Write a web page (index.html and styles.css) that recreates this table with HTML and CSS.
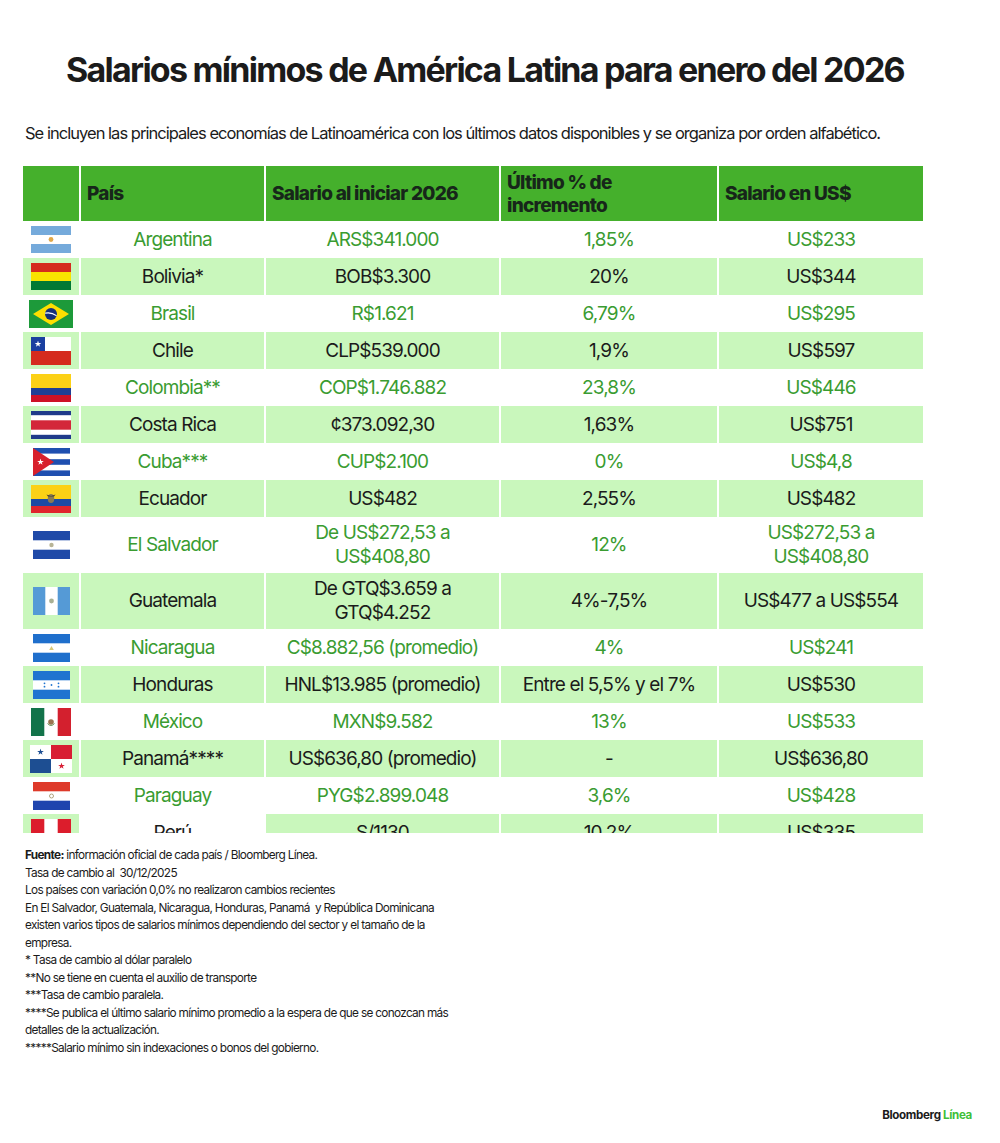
FILE: index.html
```html
<!DOCTYPE html>
<html lang="es">
<head>
<meta charset="utf-8">
<title>Salarios mínimos de América Latina para enero del 2026</title>
<link rel="stylesheet" href="styles.css">
</head>
<body>
<svg class="defs" width="0" height="0" aria-hidden="true">
  <symbol id="star" viewBox="-1 -1 2 2">
    <polygon points="0,-1 0.225,-0.309 0.951,-0.309 0.363,0.118 0.588,0.809 0,0.382 -0.588,0.809 -0.363,0.118 -0.951,-0.309 -0.225,-0.309"/>
  </symbol>
</svg>
<main class="page">
  <h1 class="title">Salarios mínimos de América Latina para enero del 2026</h1>
  <p class="subtitle">Se incluyen las principales economías de Latinoamérica con los últimos datos disponibles y se organiza por orden alfabético.</p>

  <div class="table-wrap">
    <table class="wages">
      <colgroup>
        <col class="c-flag"><col class="c-country"><col class="c-salary"><col class="c-pct"><col class="c-usd">
      </colgroup>
      <thead>
        <tr>
          <th></th>
          <th>País</th>
          <th>Salario al iniciar 2026</th>
          <th>Último % de<br>incremento</th>
          <th>Salario en US$</th>
        </tr>
      </thead>
      <tbody>
        <tr class="light">
          <td class="flag"><svg viewBox="0 0 40 27" width="40" height="27"><rect width="40" height="27" fill="#75aadb"/><rect y="9" width="40" height="9" fill="#fff"/><circle cx="20" cy="13.5" r="2.4" fill="#e0a848"/></svg></td>
          <td>Argentina</td><td>ARS$341.000</td><td>1,85%</td><td>US$233</td>
        </tr>
        <tr class="tint">
          <td class="flag"><svg viewBox="0 0 40 27" width="40" height="27"><rect width="40" height="9" fill="#d52b1e"/><rect y="9" width="40" height="9" fill="#f9e300"/><rect y="18" width="40" height="9" fill="#007934"/></svg></td>
          <td>Bolivia*</td><td>BOB$3.300</td><td>20%</td><td>US$344</td>
        </tr>
        <tr class="light">
          <td class="flag"><svg viewBox="0 0 44 28" width="44" height="28"><rect width="44" height="28" fill="#1d9a3a"/><polygon points="22,3 40,14 22,25 4,14" fill="#fedf00"/><circle cx="22" cy="14" r="6" fill="#16307a"/><path d="M16.3 12.6 Q22 11 27.7 15.2 L27.5 16.3 Q22 12.4 16.1 13.8 Z" fill="#fff"/></svg></td>
          <td>Brasil</td><td>R$1.621</td><td>6,79%</td><td>US$295</td>
        </tr>
        <tr class="tint">
          <td class="flag"><svg viewBox="0 0 40 28" width="40" height="28"><rect width="40" height="14" fill="#fff"/><rect y="14" width="40" height="14" fill="#d52b1e"/><rect width="14" height="14" fill="#1a3fa0"/><use href="#star" x="3.5" y="3.5" width="7" height="7" fill="#fff"/></svg></td>
          <td>Chile</td><td>CLP$539.000</td><td>1,9%</td><td>US$597</td>
        </tr>
        <tr class="light">
          <td class="flag"><svg viewBox="0 0 40 28" width="40" height="28"><rect width="40" height="14" fill="#fcd116"/><rect y="14" width="40" height="7" fill="#1f3f95"/><rect y="21" width="40" height="7" fill="#ce1126"/></svg></td>
          <td>Colombia**</td><td>COP$1.746.882</td><td>23,8%</td><td>US$446</td>
        </tr>
        <tr class="tint">
          <td class="flag"><svg viewBox="0 0 40 28" width="40" height="28"><rect width="40" height="28" fill="#fff"/><rect width="40" height="4.2" fill="#1f3a8a"/><rect y="9.3" width="40" height="9.4" fill="#d3273a"/><rect y="23.8" width="40" height="4.2" fill="#1f3a8a"/></svg></td>
          <td>Costa Rica</td><td>¢373.092,30</td><td>1,63%</td><td>US$751</td>
        </tr>
        <tr class="light">
          <td class="flag"><svg viewBox="0 0 37 28" width="37" height="28"><rect width="37" height="28" fill="#fff"/><rect width="37" height="5.6" fill="#1f4fb0"/><rect y="11.2" width="37" height="5.6" fill="#1f4fb0"/><rect y="22.4" width="37" height="5.6" fill="#1f4fb0"/><polygon points="0,0 21,14 0,28" fill="#d8202c"/><use href="#star" x="4" y="10.5" width="7" height="7" fill="#fff"/></svg></td>
          <td>Cuba***</td><td>CUP$2.100</td><td>0%</td><td>US$4,8</td>
        </tr>
        <tr class="tint">
          <td class="flag"><svg viewBox="0 0 40 28" width="40" height="28"><rect width="40" height="14" fill="#fbd116"/><rect y="14" width="40" height="7" fill="#1c4aa3"/><rect y="21" width="40" height="7" fill="#e0252c"/><ellipse cx="20" cy="13.5" rx="3.2" ry="4.6" fill="#8a7a52"/><path d="M15.5 9.5 L20 11 L24.5 9.5 L23 11.5 L17 11.5 Z" fill="#4a4030"/></svg></td>
          <td>Ecuador</td><td>US$482</td><td>2,55%</td><td>US$482</td>
        </tr>
        <tr class="light tall">
          <td class="flag"><svg viewBox="0 0 37 28" width="37" height="28"><rect width="37" height="28" fill="#fff"/><rect width="37" height="9.3" fill="#1f4aa8"/><rect y="18.7" width="37" height="9.3" fill="#1f4aa8"/><circle cx="18.5" cy="14" r="2.2" fill="#b8b496"/></svg></td>
          <td>El Salvador</td><td>De US$272,53 a<br>US$408,80</td><td>12%</td><td>US$272,53 a<br>US$408,80</td>
        </tr>
        <tr class="tint tall">
          <td class="flag"><svg viewBox="0 0 37 28" width="37" height="28"><rect width="37" height="28" fill="#fff"/><rect width="12.3" height="28" fill="#559ad6"/><rect x="24.7" width="12.3" height="28" fill="#559ad6"/><circle cx="18.5" cy="14" r="2.4" fill="#a8b094"/></svg></td>
          <td>Guatemala</td><td>De GTQ$3.659 a<br>GTQ$4.252</td><td>4%-7,5%</td><td>US$477 a US$554</td>
        </tr>
        <tr class="light">
          <td class="flag"><svg viewBox="0 0 37 28" width="37" height="28"><rect width="37" height="28" fill="#fff"/><rect width="37" height="9.3" fill="#1f6fcc"/><rect y="18.7" width="37" height="9.3" fill="#1f6fcc"/><polygon points="18.5,12 20.8,16 16.2,16" fill="#d8c878"/></svg></td>
          <td>Nicaragua</td><td>C$8.882,56 (promedio)</td><td>4%</td><td>US$241</td>
        </tr>
        <tr class="tint">
          <td class="flag"><svg viewBox="0 0 37 28" width="37" height="28"><rect width="37" height="28" fill="#fff"/><rect width="37" height="9.3" fill="#1f74d0"/><rect y="18.7" width="37" height="9.3" fill="#1f74d0"/><g fill="#1f74d0"><circle cx="11.5" cy="12.3" r="0.9"/><circle cx="11.5" cy="15.7" r="0.9"/><circle cx="18.5" cy="14" r="0.9"/><circle cx="25.5" cy="12.3" r="0.9"/><circle cx="25.5" cy="15.7" r="0.9"/></g></svg></td>
          <td>Honduras</td><td>HNL$13.985 (promedio)</td><td>Entre el 5,5% y el 7%</td><td>US$530</td>
        </tr>
        <tr class="light">
          <td class="flag"><svg viewBox="0 0 40 28" width="40" height="28"><rect width="40" height="28" fill="#fff"/><rect width="13.3" height="28" fill="#12734a"/><rect x="26.7" width="13.3" height="28" fill="#d3202e"/><circle cx="20" cy="14" r="2.8" fill="#9a7450"/><path d="M16.5 15.5 Q20 19.5 23.5 15.5" stroke="#5b8a4a" stroke-width="0.9" fill="none"/></svg></td>
          <td>México</td><td>MXN$9.582</td><td>13%</td><td>US$533</td>
        </tr>
        <tr class="tint">
          <td class="flag"><svg viewBox="0 0 42 28" width="42" height="28"><rect width="42" height="28" fill="#fff"/><rect x="21" width="21" height="14" fill="#d81e34"/><rect y="14" width="21" height="14" fill="#1d4e92"/><use href="#star" x="7" y="3.5" width="7" height="7" fill="#1d4e92"/><use href="#star" x="28" y="17.5" width="7" height="7" fill="#d81e34"/></svg></td>
          <td>Panamá****</td><td>US$636,80 (promedio)</td><td>-</td><td>US$636,80</td>
        </tr>
        <tr class="light">
          <td class="flag"><svg viewBox="0 0 37 28" width="37" height="28"><rect width="37" height="28" fill="#fff"/><rect width="37" height="9.3" fill="#de3a2a"/><rect y="18.7" width="37" height="9.3" fill="#1f45ae"/><circle cx="18.5" cy="14" r="2" fill="none" stroke="#a89a70" stroke-width="0.9"/></svg></td>
          <td>Paraguay</td><td>PYG$2.899.048</td><td>3,6%</td><td>US$428</td>
        </tr>
        <tr class="tint">
          <td class="flag"><svg viewBox="0 0 40 28" width="40" height="28"><rect width="40" height="28" fill="#fff"/><rect width="13.3" height="28" fill="#dc1d2c"/><rect x="26.7" width="13.3" height="28" fill="#dc1d2c"/></svg></td>
          <td class="blank">Perú</td><td>S/1130</td><td>10,2%</td><td>US$335</td>
        </tr>
      </tbody>
    </table>
  </div>

  <div class="notes">
    <p><strong>Fuente:</strong> información oficial de cada país / Bloomberg Línea.</p>
    <p>Tasa de cambio al&nbsp; 30/12/2025</p>
    <p>Los países con variación 0,0% no realizaron cambios recientes</p>
    <p>En El Salvador, Guatemala, Nicaragua, Honduras, Panamá&nbsp; y República Dominicana</p>
    <p>existen varios tipos de salarios mínimos dependiendo del sector y el tamaño de la</p>
    <p>empresa.</p>
    <p>* Tasa de cambio al dólar paralelo</p>
    <p>**No se tiene en cuenta el auxilio de transporte</p>
    <p>***Tasa de cambio paralela.</p>
    <p>****Se publica el último salario mínimo promedio a la espera de que se conozcan más</p>
    <p>detalles de la actualización.</p>
    <p>*****Salario mínimo sin indexaciones o bonos del gobierno.</p>
  </div>

  <div class="brand"><span class="brand-main">Bloomberg</span> <span class="brand-accent">Línea</span></div>
</main>
</body>
</html>
```

FILE: styles.css
```css
* { box-sizing: border-box; }

html, body {
  margin: 0;
  padding: 0;
  background: #ffffff;
}

body {
  font-family: "Inter", "Liberation Sans", sans-serif;
  color: #1b1b1b;
}

.defs {
  position: absolute;
  width: 0;
  height: 0;
  overflow: hidden;
}

.page {
  width: 1000px;
  height: 1143px;
  padding-top: 50px;
  display: flex;
  flex-direction: column;
}

.title {
  margin: 0;
  padding-right: 30px;
  font-size: 34px;
  line-height: 40px;
  font-weight: 700;
  letter-spacing: -1.75px;
  text-align: center;
  color: #1b1b1b;
}

.subtitle {
  margin: 33px 0 0 25px;
  font-size: 16.5px;
  line-height: 20px;
  letter-spacing: -0.97px;
  color: #1b1b1b;
}

.table-wrap {
  margin: 23px 0 0 23px;
  width: 900px;
  height: 667px;
  overflow: hidden;
  flex: none;
}

.wages {
  width: 900px;
  table-layout: fixed;
  border-collapse: collapse;
  border-spacing: 0;
}

.c-flag { width: 57px; }
.c-country { width: 185px; }
.c-salary { width: 235px; }
.c-pct { width: 218px; }
.c-usd { width: 205px; }

.wages th,
.wages td {
  padding: 0;
  border-right: 2px solid #ffffff;
}

.wages th:last-child,
.wages td:last-child {
  border-right: none;
}

.wages th {
  height: 55px;
  background: #45b02c;
  color: #17261a;
  font-size: 19px;
  line-height: 23px;
  font-weight: 800;
  letter-spacing: -0.75px;
  text-align: left;
  padding-left: 6px;
  vertical-align: middle;
}

.wages td {
  height: 37px;
  font-size: 19px;
  line-height: 24px;
  letter-spacing: -0.9px;
  text-align: center;
  vertical-align: middle;
}

.wages tr.tall td {
  height: 56px;
}

.wages tr.light td {
  background: #ffffff;
  color: #3a9c31;
}

.wages tr.tint td {
  background: #c9f7bc;
  color: #1b1b1b;
}

.wages tr.tint td.blank {
  background: #ffffff;
}

.wages td.flag svg {
  display: block;
  margin: 0 auto;
}

.notes {
  margin: 14px 0 0 25px;
  font-size: 11.8px;
  line-height: 17.5px;
  letter-spacing: -0.68px;
  color: #1b1b1b;
}

.notes p {
  margin: 0;
  white-space: nowrap;
}

.notes strong {
  font-weight: 700;
}

.brand {
  margin-top: auto;
  margin-bottom: 20px;
  align-self: flex-end;
  margin-right: 28px;
  font-size: 11.6px;
  line-height: 16px;
  font-weight: 700;
  letter-spacing: -0.35px;
}

.brand-main { color: #1b1b1b; }
.brand-accent { color: #3fbf3a; }
```
